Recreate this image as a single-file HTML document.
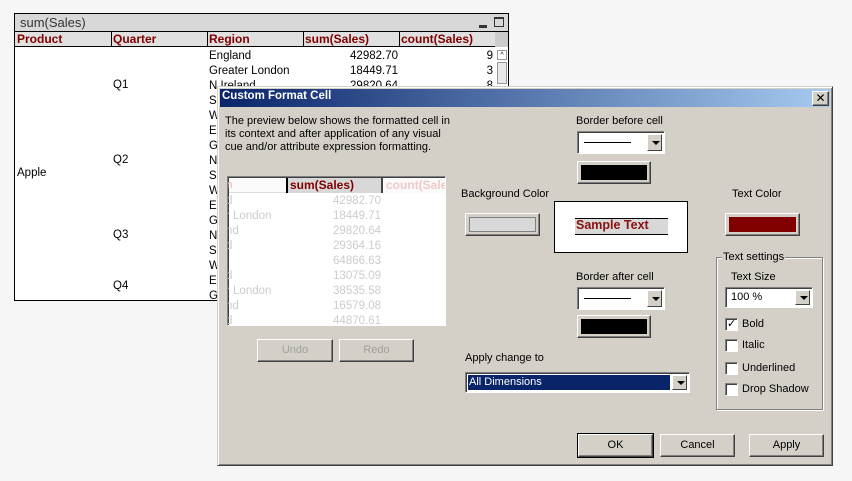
<!DOCTYPE html>
<html><head><meta charset="utf-8"><style>
*{box-sizing:border-box}
body{margin:0;width:852px;height:481px;background:#f6f6f6;position:relative;overflow:hidden;font-family:"Liberation Sans","DejaVu Sans",sans-serif;font-size:11px;color:#000}
.a{position:absolute;white-space:nowrap}
.tbl{left:14px;top:13px;width:495px;height:288px;border:1px solid #000;background:#fff;font-size:11.5px}
.hd{color:#800000;font-weight:bold;font-size:12px}
.btn{position:absolute;background:#d4d0c8;border:1px solid;border-color:#fff #404040 #404040 #fff;box-shadow:inset -1px -1px 0 #808080;text-align:center}
.sunk{position:absolute;border:1px solid;border-color:#808080 #fff #fff #808080;box-shadow:inset 1px 1px 0 #404040}
.chk{position:absolute;width:13px;height:13px;background:#fff;border:1px solid;border-color:#808080 #fff #fff #808080;box-shadow:inset 1px 1px 0 #404040}
.arr{position:absolute;right:2px;top:2px;width:15px;background:#d4d0c8;border:1px solid;border-color:#fff #404040 #404040 #fff}
.arr:after{content:"";position:absolute;left:4px;top:50%;margin-top:-2px;border-left:4px solid transparent;border-right:4px solid transparent;border-top:4px solid #000}
</style></head><body>
<div class="a tbl">
 <div class="a" style="left:0;top:0;width:493px;height:18px;background:#d8d8d8;border-bottom:1px solid #000"></div>
 <div class="a" style="left:5px;top:1px;font-size:13px;color:#333">sum(Sales)</div>
 <div class="a" style="left:464px;top:11px;width:8px;height:3px;background:#333"></div>
 <div class="a" style="left:479px;top:3px;width:10px;height:10px;border:1px solid #333;border-top-width:2px"></div>
 <div class="a" style="left:0;top:18px;width:480px;height:15px;background:#e0e0e0;border-bottom:1px solid #000"></div>
 <div class="a" style="left:96px;top:18px;width:1px;height:15px;background:#000"></div>
 <div class="a" style="left:192px;top:18px;width:1px;height:15px;background:#000"></div>
 <div class="a" style="left:288px;top:18px;width:1px;height:15px;background:#000"></div>
 <div class="a" style="left:384px;top:18px;width:1px;height:15px;background:#000"></div>
 <div class="a" style="left:480px;top:18px;width:13px;height:15px;background:#ccc"></div>
 <div class="a hd" style="left:2px;top:18px">Product</div>
 <div class="a hd" style="left:98px;top:18px">Quarter</div>
 <div class="a hd" style="left:194px;top:18px">Region</div>
 <div class="a hd" style="left:290px;top:18px">sum(Sales)</div>
 <div class="a hd" style="left:386px;top:18px">count(Sales)</div>
 <div class="a" style="left:482px;top:36px;width:10px;height:10px;border:1px solid #999;font-size:7px;text-align:center;line-height:9px">^</div>
 <div class="a" style="left:482px;top:48px;width:10px;height:22px;border:1px solid #999;background:#e8e8e8"></div>
 <div class="a" style="left:2px;top:153px">Apple</div>
 <div class="a" style="left:98px;top:65px">Q1</div>
 <div class="a" style="left:98px;top:140px">Q2</div>
 <div class="a" style="left:98px;top:215px">Q3</div>
 <div class="a" style="left:98px;top:266px">Q4</div>
 <div class="a" style="left:194px;top:35px;line-height:15px">England<br>Greater London<br>N Ireland<br>Scotland<br>Wales<br>England<br>Greater London<br>N Ireland<br>Scotland<br>Wales<br>England<br>Greater London<br>N Ireland<br>Scotland<br>Wales<br>England<br>Greater London</div>
 <div class="a" style="left:300px;top:35px;width:83px;text-align:right;line-height:15px">42982.70<br>18449.71<br>29820.64</div>
 <div class="a" style="left:440px;top:35px;width:38px;text-align:right;line-height:15px">9<br>3<br>8</div>
</div>

<div class="a" style="left:217px;top:86px;width:616px;height:380px;background:#d4d0c8;border:1px solid;border-color:#d4d0c8 #404040 #404040 #d4d0c8;box-shadow:inset 1px 1px 0 #fff,inset -1px -1px 0 #808080">
 <div class="a" style="left:2px;top:2px;width:610px;height:18px;background:linear-gradient(90deg,#0a246a,#a6caf0)"></div>
 <div class="a" style="left:4px;top:3px;color:#fff;font-weight:bold;font-size:11.5px">Custom Format Cell</div>
 <div class="btn" style="left:594px;top:4px;width:17px;height:15px;font-size:12px;font-weight:bold;line-height:12px">✕</div>
</div>
<div class="a" style="left:225px;top:115px;line-height:13px">The preview below shows the formatted cell in<br>its context and after application of any visual<br>cue and/or attribute expression formatting.</div>

<div class="sunk" style="left:227px;top:176px;width:219px;height:150px;background:#fff;overflow:hidden">
 <div class="a" style="left:1px;top:1px;width:58px;height:15px;background:#fafafa;border-bottom:1px solid #ddd"></div>
 <div class="a" style="left:58px;top:1px;width:97px;height:15px;background:#d8d8d8;border-left:2px solid #000;border-right:2px solid #444"></div>
 <div class="a" style="left:155px;top:1px;width:70px;height:15px;background:#fafafa"></div>
 <div class="a hd" style="left:62px;top:1px">sum(Sales)</div>
 <div class="a hd" style="left:158px;top:1px;color:#f0c8c8">count(Sales)</div>
 <div class="a" style="left:-2px;top:2px;color:#f0c8c8;font-weight:bold">n</div>
 <div class="a" style="left:-2px;top:17px;color:#ccc;line-height:15px;font-size:11.5px">d<br>r London<br>nd<br>d<br>&nbsp;<br>d<br>r London<br>nd<br>d</div>
 <div class="a" style="left:90px;top:17px;width:63px;text-align:right;color:#ccc;line-height:15px;font-size:11.5px">42982.70<br>18449.71<br>29820.64<br>29364.16<br>64866.63<br>13075.09<br>38535.58<br>16579.08<br>44870.61</div>
</div>
<div class="btn" style="left:257px;top:339px;width:76px;height:23px;line-height:20px;color:#a0a0a0">Undo</div>
<div class="btn" style="left:339px;top:339px;width:75px;height:23px;line-height:20px;color:#a0a0a0">Redo</div>

<div class="a" style="left:576px;top:115px">Border before cell</div>
<div class="sunk" style="left:577px;top:131px;width:88px;height:23px;background:#fff"><div class="a" style="left:6px;top:10px;width:47px;height:1px;background:#000"></div><div class="arr" style="height:17px"></div></div>
<div class="btn" style="left:577px;top:161px;width:74px;height:23px"><div class="a" style="left:3px;top:3px;width:66px;height:15px;background:#000"></div></div>

<div class="a" style="left:461px;top:188px">Background Color</div>
<div class="btn" style="left:465px;top:213px;width:75px;height:23px"><div class="a" style="left:3px;top:3px;width:67px;height:15px;background:#d8d8d8;border:1px solid #808080"></div></div>

<div class="a" style="left:554px;top:201px;width:134px;height:52px;background:#fff;border:1px solid #000"></div>
<div class="a" style="left:575px;top:218px;width:93px;height:17px;background:#d8d8d8;border-top:1px solid #000;border-bottom:1px solid #000"></div>
<div class="a" style="left:576px;top:218px;color:#8b1010;font-weight:bold;font-size:12.5px">Sample Text</div>

<div class="a" style="left:732px;top:188px">Text Color</div>
<div class="btn" style="left:725px;top:213px;width:75px;height:23px"><div class="a" style="left:3px;top:3px;width:67px;height:15px;background:#800000"></div></div>

<div class="a" style="left:576px;top:271px">Border after cell</div>
<div class="sunk" style="left:577px;top:287px;width:88px;height:23px;background:#fff"><div class="a" style="left:6px;top:10px;width:47px;height:1px;background:#000"></div><div class="arr" style="height:17px"></div></div>
<div class="btn" style="left:577px;top:315px;width:74px;height:23px"><div class="a" style="left:3px;top:3px;width:66px;height:15px;background:#000"></div></div>

<div class="a" style="left:465px;top:352px">Apply change to</div>
<div class="sunk" style="left:465px;top:372px;width:225px;height:21px;background:#fff"><div class="a" style="left:2px;top:2px;width:202px;height:15px;background:#0a246a;color:#fff;padding-left:1px;line-height:14px">All Dimensions</div><div class="arr" style="height:15px"></div></div>

<div class="a" style="left:716px;top:257px;width:107px;height:153px;border:1px solid #808080;box-shadow:1px 1px 0 #fff,inset 1px 1px 0 #fff"></div>
<div class="a" style="left:722px;top:251px;background:#d4d0c8;padding:0 1px">Text settings</div>
<div class="a" style="left:731px;top:271px">Text Size</div>
<div class="sunk" style="left:725px;top:287px;width:88px;height:21px;background:#fff"><div class="a" style="left:5px;top:3px">100 %</div><div class="arr" style="height:15px"></div></div>
<div class="chk" style="left:725px;top:318px"><div class="a" style="left:1px;top:-2px;font-size:11px;font-weight:bold;font-family:'DejaVu Sans',sans-serif">✓</div></div>
<div class="a" style="left:742px;top:318px">Bold</div>
<div class="chk" style="left:725px;top:339px"></div><div class="a" style="left:742px;top:339px">Italic</div>
<div class="chk" style="left:725px;top:362px"></div><div class="a" style="left:742px;top:362px">Underlined</div>
<div class="chk" style="left:725px;top:383px"></div><div class="a" style="left:742px;top:383px">Drop Shadow</div>

<div class="btn" style="left:578px;top:434px;width:75px;height:23px;line-height:20px;outline:1px solid #000">OK</div>
<div class="btn" style="left:660px;top:434px;width:75px;height:23px;line-height:20px">Cancel</div>
<div class="btn" style="left:749px;top:434px;width:75px;height:23px;line-height:20px">Apply</div>
</body></html>
